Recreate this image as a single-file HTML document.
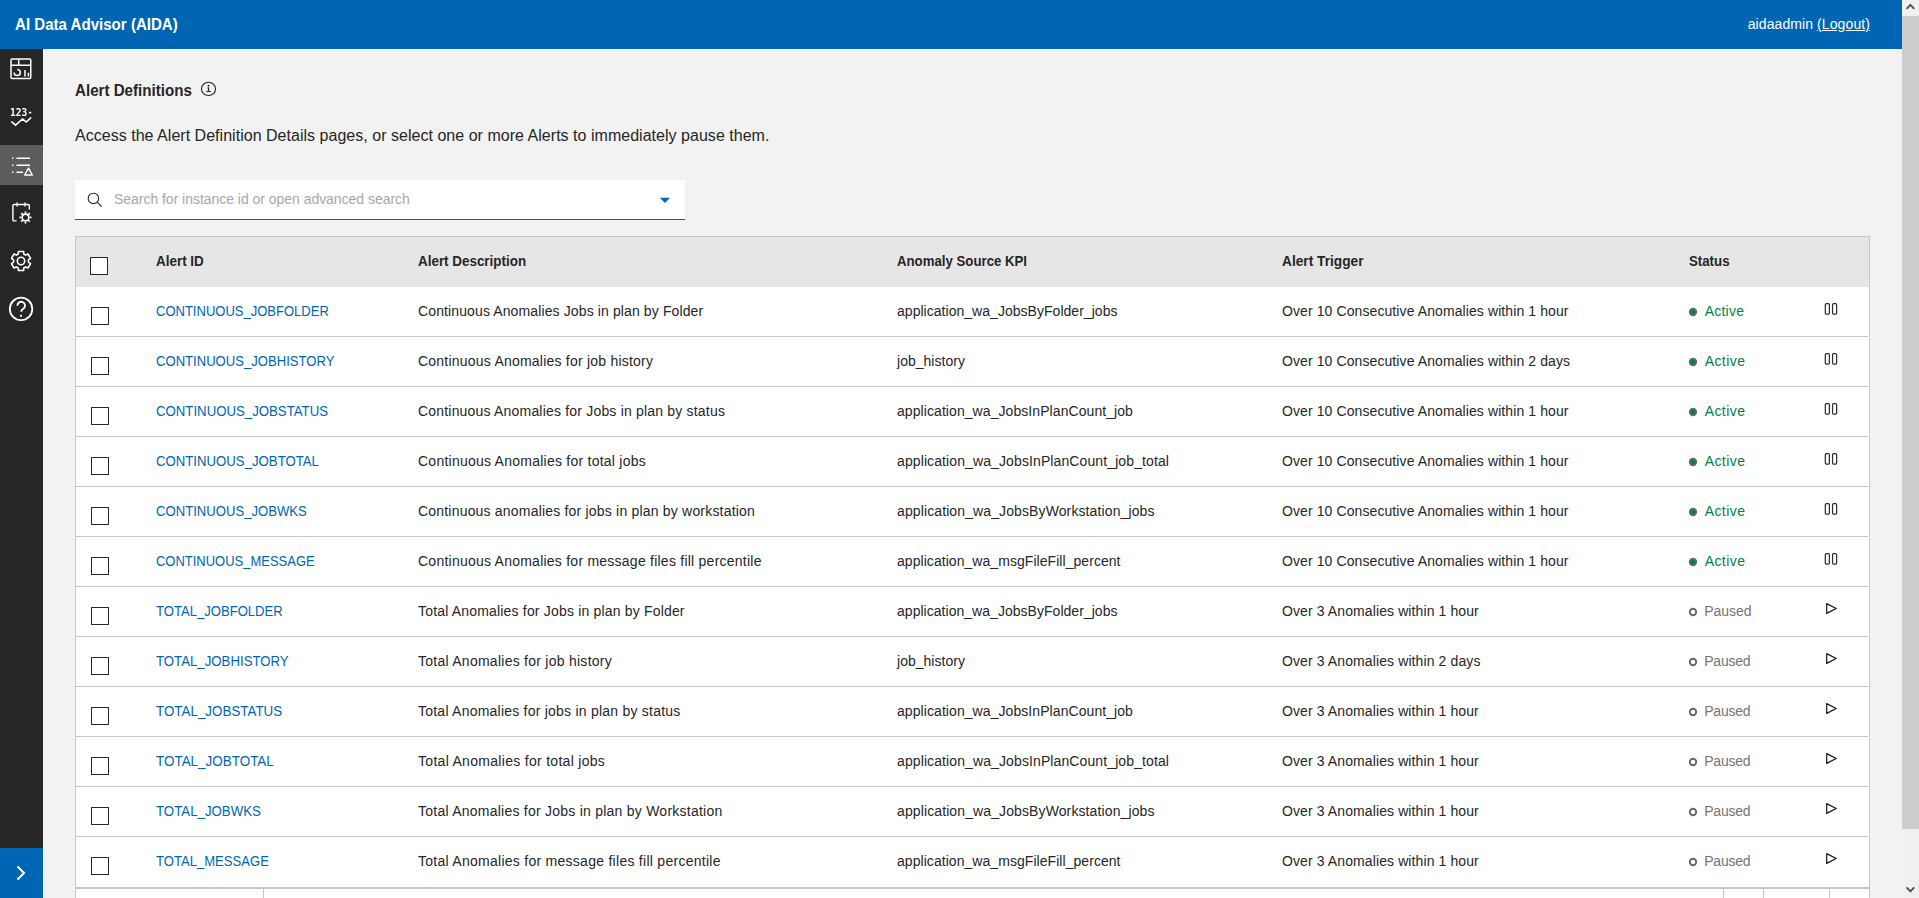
<!DOCTYPE html>
<html lang="en">
<head>
<meta charset="utf-8">
<title>AI Data Advisor (AIDA)</title>
<style>
*{box-sizing:border-box;margin:0;padding:0}
html,body{width:1919px;height:898px;overflow:hidden;background:#f2f2f2;font-family:"Liberation Sans",sans-serif;color:#262626;font-size:14px}
.abs{position:absolute}
#hdr{position:absolute;left:0;top:0;width:1902px;height:49px;background:#0066b3;color:#fff}
#hdr .title{position:absolute;left:15px;top:0;line-height:49px;font-size:16px;font-weight:bold;white-space:nowrap}
#hdr .user{position:absolute;right:32px;top:0;line-height:49px;font-size:14px;white-space:nowrap}
#hdr .user u{text-decoration:underline}
#side{position:absolute;left:0;top:49px;width:43px;height:849px;background:#262626}
#side .active{position:absolute;left:0;top:96px;width:43px;height:40px;background:#5c5c5c}
#side .expand{position:absolute;left:0;top:799px;width:43px;height:50px;background:#0066b3}
#side svg{position:absolute}
#sb{position:absolute;left:1902px;top:0;width:17px;height:898px;background:#f0f0f0}
#sb .thumb{position:absolute;left:0;top:16px;width:17px;height:813px;background:#cdcdcd}
#sb svg{position:absolute;left:0}
h1{position:absolute;left:75px;top:79px;font-size:16px;line-height:24px;font-weight:bold;white-space:nowrap;color:#262626}
#info{position:absolute;left:200px;top:80px}
#desc{position:absolute;left:75px;top:124px;font-size:16px;line-height:24px;white-space:nowrap;color:#262626}
#search{position:absolute;left:75px;top:180px;width:610px;height:40px;background:#fff;border-bottom:1px solid #0066b3}
#search .ph{position:absolute;left:39px;top:0;line-height:38px;font-size:14px;color:#a8a8a8;white-space:nowrap}
#search svg{position:absolute}
#tbl{position:absolute;left:75px;top:236px;width:1795px;height:700px;background:#fff;border:1px solid #c6c6c6}
#thead{position:absolute;left:76px;top:237px;width:1793px;height:50px;background:#e6e6e6;font-weight:bold;font-size:14px}
#thead .h{position:absolute;top:0;line-height:49px;white-space:nowrap;color:#262626}
.row{position:absolute;left:76px;width:1792px;height:50px;border-bottom:1px solid #c6c6c6;font-size:14px}
.row .c{position:absolute;top:0;line-height:49px;white-space:nowrap}
.cb{position:absolute;left:15px;top:20px;width:18px;height:18px;border:1px solid #262626;background:#fff;border-radius:.5px}
#thead .cb{left:14px;top:20px}
.id{left:80px;color:#0066b3}
.de{left:342px}
.kp{left:821px}
.tr{left:1206px}
.st{left:1628.7px}
.st.pau{left:1628.3px}
svg.dot{position:absolute;left:1612.1px;top:19.9px}
.act{color:#00804a}
.pau{color:#757575}
svg.ic{left:1747px;top:14px !important}
svg.ic.pl{top:14px !important}
.row.last{border-bottom:0}
#foot{position:absolute;left:76px;top:887px;width:1793px;height:11px;background:#fff;border-top:2px solid #c6c6c6}
#foot i{position:absolute;top:0;width:1px;height:10px;background:#c6c6c6}
</style>
</head>
<body>
<div id="hdr">
<div class="title"><span class="t" id="title" style="display:inline-block;transform-origin:0 50%;transform:scaleX(0.9422)">AI Data Advisor (AIDA)</span></div>
<div class="user"><span class="t" id="user" style="letter-spacing:0.093px">aidaadmin <u>(Logout)</u></span></div>
</div>

<div id="side">
<div class="active"></div>
<svg style="left:0;top:0;will-change:transform" width="43" height="300" viewBox="0 49 43 300" fill="none" stroke="#fff" stroke-width="1.5">
<!-- dashboard -->
<rect x="11" y="58.9" width="19.75" height="19.7" rx="1"/>
<path d="M11 65.3H30.75M18.7 58.9V65.3"/>
<path d="M17.2 69.4A3.1 3.1 0 1 1 14.1 72.5"/>
<path d="M25 70V76.4M28.4 72.8V76.4"/>
<!-- kpi -->
<text transform="translate(9.900 115.700) scale(.915 1)" font-family="DejaVu Sans Mono, Liberation Mono, monospace" font-size="10.500" font-weight="bold" fill="#fff" stroke="none">123</text>
<rect x="28.900" y="111.800" width="2.400" height="1.600" fill="#fff" stroke="none"/>
<path d="M11.800 121.900L15.600 125.200L22.500 119L26.300 122L30.700 117.800" stroke-width="1.600" stroke-linecap="round" stroke-linejoin="miter"/>
<!-- alert list -->
<g stroke-width="1.45">
<path d="M16.500 158.200H30M16.500 165.200H30M16.500 172.200H23"/>
<path d="M12 158.200H13.400M12 165.200H13.400M12 172.200H13.400"/>
<path d="M28.500 168.200L32.300 175H24.700Z" stroke-linejoin="round"/>
</g>
<!-- calendar gear -->
<g stroke-width="1.4">
<path d="M16.600 220.900H13.900a1 1 0 0 1 -1 -1V205.500a1 1 0 0 1 1 -1H28.300a1 1 0 0 1 1 1V209.500"/>
<path d="M17.100 202.400V206.600M25 202.400V206.600"/>
<circle cx="25.500" cy="217.400" r="3.300" stroke-width="1.600"/>
<path transform="translate(25.500 217.400)" stroke-width="1.800" d="M4.100 0L6 0M2.900 2.900L4.240 4.240M0 4.100L0 6M-2.900 2.900L-4.240 4.240M-4.100 0L-6 0M-2.900 -2.900L-4.240 -4.240M0 -4.100L0 -6M2.900 -2.900L4.240 -4.240"/>
</g>
<!-- gear -->
<g transform="translate(9 249)" stroke-width="1.600" stroke-linejoin="round">
<path d="M14.810 5.050 L14.560 2.440 L9.440 2.440 L9.190 5.050 L7.380 6.090 L5.000 5.000 L2.440 9.440 L4.570 10.960 L4.570 13.040 L2.440 14.560 L5.000 19.000 L7.380 17.910 L9.190 18.950 L9.440 21.560 L14.560 21.560 L14.810 18.950 L16.620 17.910 L19.000 19.000 L21.560 14.560 L19.430 13.040 L19.430 10.960 L21.560 9.440 L19.000 5.000 L16.620 6.090Z"/>
<circle cx="12" cy="12" r="3.700"/>
</g>
<!-- help -->
<circle cx="21.050" cy="308.950" r="11.250" stroke-width="1.800"/>
<path d="M17.400 305.700a3.800 3.800 0 1 1 5.900 3.100c-1.400 .9 -2.100 1.500 -2.100 3" stroke-width="1.900"/>
<rect x="20" y="314.800" width="2" height="2" rx=".4" fill="#fff" stroke="none"/>
</svg>
<div class="expand">
<svg style="left:16px;top:17.200px" width="10" height="16" viewBox="0 0 10 16" fill="none" stroke="#fff" stroke-width="2"><path d="M1.500 1.500 L8 8 L1.500 14.500"/></svg>
</div>
</div>

<h1><span class="t" id="h1" style="display:inline-block;transform-origin:0 50%;transform:scaleX(0.9455)">Alert Definitions</span></h1>
<svg id="info" width="18" height="18" viewBox="0 0 18 18" fill="none" stroke="#262626">
<ellipse cx="8.500" cy="8.900" rx="7.050" ry="6.600" stroke-width="1.100"/>
<path d="M8.550 7.500V11.400" stroke-width="1.300"/>
<path d="M7.300 7.900H8.600" stroke-width=".8"/>
<path d="M6.200 11.550H10.900" stroke-width="1"/>
<circle cx="8.550" cy="5.750" r=".95" fill="#262626" stroke="none"/>
</svg>
<div id="desc"><span class="t" id="desc_t" style="letter-spacing:0.026px">Access the Alert Definition Details pages, or select one or more Alerts to immediately pause them.</span></div>

<div id="search">
<svg style="left:10px;top:10px" width="20" height="20" viewBox="0 0 20 20" fill="none" stroke="#262626" stroke-width="1.100"><circle cx="8.400" cy="8.400" r="5.200"/><path d="M12.200 12.300L16.800 16.600"/></svg>
<span class="ph"><span class="t" id="ph" style="letter-spacing:-0.033px">Search for instance id or open advanced search</span></span>
<svg style="left:580px;top:10px" width="20" height="20" viewBox="0 0 20 20"><path d="M4.900 7.800H15L9.950 13Z" fill="#0066b3"/></svg>
</div>

<div id="tbl"></div>
<div id="thead">
<i class="cb"></i>
<span class="h" style="left:80px"><span class="t" id="h_a" style="display:inline-block;transform-origin:0 50%;transform:scaleX(0.9600)">Alert ID</span></span>
<span class="h" style="left:342px"><span class="t" id="h_b" style="display:inline-block;transform-origin:0 50%;transform:scaleX(0.9584)">Alert Description</span></span>
<span class="h" style="left:821px"><span class="t" id="h_c" style="display:inline-block;transform-origin:0 50%;transform:scaleX(0.9444)">Anomaly Source KPI</span></span>
<span class="h" style="left:1206px"><span class="t" id="h_d" style="display:inline-block;transform-origin:0 50%;transform:scaleX(0.9786)">Alert Trigger</span></span>
<span class="h" style="left:1613px"><span class="t" id="h_s" style="display:inline-block;transform-origin:0 50%;transform:scaleX(0.9466)">Status</span></span>
</div>
<div class="row" style="top:287px">
<i class="cb"></i>
<a class="c id"><span class="t" id="a0" style="display:inline-block;transform-origin:0 50%;transform:scaleX(0.9295)">CONTINUOUS_JOBFOLDER</span></a>
<span class="c de"><span class="t" id="b0" style="letter-spacing:0.119px">Continuous Anomalies Jobs in plan by Folder</span></span>
<span class="c kp"><span class="t" id="c0" style="letter-spacing:0.032px">application_wa_JobsByFolder_jobs</span></span>
<span class="c tr"><span class="t" id="d0" style="letter-spacing:0.095px">Over 10 Consecutive Anomalies within 1 hour</span></span>
<svg class="dot" width="10" height="10" viewBox="0 0 10 10"><circle cx="5" cy="5" r="3.2" fill="#00804a" stroke="#666" stroke-width="1.9"/></svg><span class="c st act"><span class="t" id="s0" style="letter-spacing:0.220px">Active</span></span>
<svg class="c ic" width="16" height="16" viewBox="0 0 16 16"><rect x="2.300" y="2.600" width="4.100" height="10.600" rx="1.200" fill="none" stroke="#2b2b2b" stroke-width="1.200"/><rect x="9.550" y="2.600" width="4.100" height="10.600" rx="1.200" fill="none" stroke="#2b2b2b" stroke-width="1.200"/></svg>
</div>
<div class="row" style="top:337px">
<i class="cb"></i>
<a class="c id"><span class="t" id="a1" style="display:inline-block;transform-origin:0 50%;transform:scaleX(0.9346)">CONTINUOUS_JOBHISTORY</span></a>
<span class="c de"><span class="t" id="b1" style="letter-spacing:0.221px">Continuous Anomalies for job history</span></span>
<span class="c kp"><span class="t" id="c1" style="letter-spacing:0.020px">job_history</span></span>
<span class="c tr"><span class="t" id="d1" style="letter-spacing:0.095px">Over 10 Consecutive Anomalies within 2 days</span></span>
<svg class="dot" width="10" height="10" viewBox="0 0 10 10"><circle cx="5" cy="5" r="3.2" fill="#00804a" stroke="#666" stroke-width="1.9"/></svg><span class="c st act"><span class="t" id="s1" style="letter-spacing:0.420px">Active</span></span>
<svg class="c ic" width="16" height="16" viewBox="0 0 16 16"><rect x="2.300" y="2.600" width="4.100" height="10.600" rx="1.200" fill="none" stroke="#2b2b2b" stroke-width="1.200"/><rect x="9.550" y="2.600" width="4.100" height="10.600" rx="1.200" fill="none" stroke="#2b2b2b" stroke-width="1.200"/></svg>
</div>
<div class="row" style="top:387px">
<i class="cb"></i>
<a class="c id"><span class="t" id="a2" style="display:inline-block;transform-origin:0 50%;transform:scaleX(0.9435)">CONTINUOUS_JOBSTATUS</span></a>
<span class="c de"><span class="t" id="b2" style="letter-spacing:0.192px">Continuous Anomalies for Jobs in plan by status</span></span>
<span class="c kp"><span class="t" id="c2" style="letter-spacing:0.073px">application_wa_JobsInPlanCount_job</span></span>
<span class="c tr"><span class="t" id="d2" style="letter-spacing:0.095px">Over 10 Consecutive Anomalies within 1 hour</span></span>
<svg class="dot" width="10" height="10" viewBox="0 0 10 10"><circle cx="5" cy="5" r="3.2" fill="#00804a" stroke="#666" stroke-width="1.9"/></svg><span class="c st act"><span class="t" id="s2" style="letter-spacing:0.420px">Active</span></span>
<svg class="c ic" width="16" height="16" viewBox="0 0 16 16"><rect x="2.300" y="2.600" width="4.100" height="10.600" rx="1.200" fill="none" stroke="#2b2b2b" stroke-width="1.200"/><rect x="9.550" y="2.600" width="4.100" height="10.600" rx="1.200" fill="none" stroke="#2b2b2b" stroke-width="1.200"/></svg>
</div>
<div class="row" style="top:437px">
<i class="cb"></i>
<a class="c id"><span class="t" id="a3" style="display:inline-block;transform-origin:0 50%;transform:scaleX(0.9422)">CONTINUOUS_JOBTOTAL</span></a>
<span class="c de"><span class="t" id="b3" style="letter-spacing:0.243px">Continuous Anomalies for total jobs</span></span>
<span class="c kp"><span class="t" id="c3" style="letter-spacing:0.107px">application_wa_JobsInPlanCount_job_total</span></span>
<span class="c tr"><span class="t" id="d3" style="letter-spacing:0.095px">Over 10 Consecutive Anomalies within 1 hour</span></span>
<svg class="dot" width="10" height="10" viewBox="0 0 10 10"><circle cx="5" cy="5" r="3.2" fill="#00804a" stroke="#666" stroke-width="1.9"/></svg><span class="c st act"><span class="t" id="s3" style="letter-spacing:0.420px">Active</span></span>
<svg class="c ic" width="16" height="16" viewBox="0 0 16 16"><rect x="2.300" y="2.600" width="4.100" height="10.600" rx="1.200" fill="none" stroke="#2b2b2b" stroke-width="1.200"/><rect x="9.550" y="2.600" width="4.100" height="10.600" rx="1.200" fill="none" stroke="#2b2b2b" stroke-width="1.200"/></svg>
</div>
<div class="row" style="top:487px">
<i class="cb"></i>
<a class="c id"><span class="t" id="a4" style="display:inline-block;transform-origin:0 50%;transform:scaleX(0.9366)">CONTINUOUS_JOBWKS</span></a>
<span class="c de"><span class="t" id="b4" style="letter-spacing:0.196px">Continuous anomalies for jobs in plan by workstation</span></span>
<span class="c kp"><span class="t" id="c4" style="letter-spacing:0.111px">application_wa_JobsByWorkstation_jobs</span></span>
<span class="c tr"><span class="t" id="d4" style="letter-spacing:0.095px">Over 10 Consecutive Anomalies within 1 hour</span></span>
<svg class="dot" width="10" height="10" viewBox="0 0 10 10"><circle cx="5" cy="5" r="3.2" fill="#00804a" stroke="#666" stroke-width="1.9"/></svg><span class="c st act"><span class="t" id="s4" style="letter-spacing:0.420px">Active</span></span>
<svg class="c ic" width="16" height="16" viewBox="0 0 16 16"><rect x="2.300" y="2.600" width="4.100" height="10.600" rx="1.200" fill="none" stroke="#2b2b2b" stroke-width="1.200"/><rect x="9.550" y="2.600" width="4.100" height="10.600" rx="1.200" fill="none" stroke="#2b2b2b" stroke-width="1.200"/></svg>
</div>
<div class="row" style="top:537px">
<i class="cb"></i>
<a class="c id"><span class="t" id="a5" style="display:inline-block;transform-origin:0 50%;transform:scaleX(0.9269)">CONTINUOUS_MESSAGE</span></a>
<span class="c de"><span class="t" id="b5" style="letter-spacing:0.240px">Continuous Anomalies for message files fill percentile</span></span>
<span class="c kp"><span class="t" id="c5" style="letter-spacing:0.052px">application_wa_msgFileFill_percent</span></span>
<span class="c tr"><span class="t" id="d5" style="letter-spacing:0.095px">Over 10 Consecutive Anomalies within 1 hour</span></span>
<svg class="dot" width="10" height="10" viewBox="0 0 10 10"><circle cx="5" cy="5" r="3.2" fill="#00804a" stroke="#666" stroke-width="1.9"/></svg><span class="c st act"><span class="t" id="s5" style="letter-spacing:0.420px">Active</span></span>
<svg class="c ic" width="16" height="16" viewBox="0 0 16 16"><rect x="2.300" y="2.600" width="4.100" height="10.600" rx="1.200" fill="none" stroke="#2b2b2b" stroke-width="1.200"/><rect x="9.550" y="2.600" width="4.100" height="10.600" rx="1.200" fill="none" stroke="#2b2b2b" stroke-width="1.200"/></svg>
</div>
<div class="row" style="top:587px">
<i class="cb"></i>
<a class="c id"><span class="t" id="a6" style="display:inline-block;transform-origin:0 50%;transform:scaleX(0.9341)">TOTAL_JOBFOLDER</span></a>
<span class="c de"><span class="t" id="b6" style="letter-spacing:0.180px">Total Anomalies for Jobs in plan by Folder</span></span>
<span class="c kp"><span class="t" id="c6" style="letter-spacing:0.032px">application_wa_JobsByFolder_jobs</span></span>
<span class="c tr"><span class="t" id="d6" style="letter-spacing:0.103px">Over 3 Anomalies within 1 hour</span></span>
<svg class="dot" width="10" height="10" viewBox="0 0 10 10"><circle cx="5" cy="5" r="3.2" fill="#fff" stroke="#666" stroke-width="1.9"/></svg><span class="c st pau"><span class="t" id="s6" style="letter-spacing:-0.060px">Paused</span></span>
<svg class="c ic pl" width="16" height="16" viewBox="0 0 16 16"><path d="M3.7 2.6 L13.2 7.5 L3.7 12.4 Z" fill="none" stroke="#161616" stroke-width="1.200" stroke-linejoin="round"/></svg>
</div>
<div class="row" style="top:637px">
<i class="cb"></i>
<a class="c id"><span class="t" id="a7" style="display:inline-block;transform-origin:0 50%;transform:scaleX(0.9440)">TOTAL_JOBHISTORY</span></a>
<span class="c de"><span class="t" id="b7" style="letter-spacing:0.259px">Total Anomalies for job history</span></span>
<span class="c kp"><span class="t" id="c7" style="letter-spacing:0.020px">job_history</span></span>
<span class="c tr"><span class="t" id="d7" style="letter-spacing:0.106px">Over 3 Anomalies within 2 days</span></span>
<svg class="dot" width="10" height="10" viewBox="0 0 10 10"><circle cx="5" cy="5" r="3.2" fill="#fff" stroke="#666" stroke-width="1.9"/></svg><span class="c st pau"><span class="t" id="s7" style="letter-spacing:-0.260px">Paused</span></span>
<svg class="c ic pl" width="16" height="16" viewBox="0 0 16 16"><path d="M3.7 2.6 L13.2 7.5 L3.7 12.4 Z" fill="none" stroke="#161616" stroke-width="1.200" stroke-linejoin="round"/></svg>
</div>
<div class="row" style="top:687px">
<i class="cb"></i>
<a class="c id"><span class="t" id="a8" style="display:inline-block;transform-origin:0 50%;transform:scaleX(0.9561)">TOTAL_JOBSTATUS</span></a>
<span class="c de"><span class="t" id="b8" style="letter-spacing:0.229px">Total Anomalies for jobs in plan by status</span></span>
<span class="c kp"><span class="t" id="c8" style="letter-spacing:0.073px">application_wa_JobsInPlanCount_job</span></span>
<span class="c tr"><span class="t" id="d8" style="letter-spacing:0.103px">Over 3 Anomalies within 1 hour</span></span>
<svg class="dot" width="10" height="10" viewBox="0 0 10 10"><circle cx="5" cy="5" r="3.2" fill="#fff" stroke="#666" stroke-width="1.9"/></svg><span class="c st pau"><span class="t" id="s8" style="letter-spacing:-0.260px">Paused</span></span>
<svg class="c ic pl" width="16" height="16" viewBox="0 0 16 16"><path d="M3.7 2.6 L13.2 7.5 L3.7 12.4 Z" fill="none" stroke="#161616" stroke-width="1.200" stroke-linejoin="round"/></svg>
</div>
<div class="row" style="top:737px">
<i class="cb"></i>
<a class="c id"><span class="t" id="a9" style="display:inline-block;transform-origin:0 50%;transform:scaleX(0.9602)">TOTAL_JOBTOTAL</span></a>
<span class="c de"><span class="t" id="b9" style="letter-spacing:0.298px">Total Anomalies for total jobs</span></span>
<span class="c kp"><span class="t" id="c9" style="letter-spacing:0.107px">application_wa_JobsInPlanCount_job_total</span></span>
<span class="c tr"><span class="t" id="d9" style="letter-spacing:0.103px">Over 3 Anomalies within 1 hour</span></span>
<svg class="dot" width="10" height="10" viewBox="0 0 10 10"><circle cx="5" cy="5" r="3.2" fill="#fff" stroke="#666" stroke-width="1.9"/></svg><span class="c st pau"><span class="t" id="s9" style="letter-spacing:-0.260px">Paused</span></span>
<svg class="c ic pl" width="16" height="16" viewBox="0 0 16 16"><path d="M3.7 2.6 L13.2 7.5 L3.7 12.4 Z" fill="none" stroke="#161616" stroke-width="1.200" stroke-linejoin="round"/></svg>
</div>
<div class="row" style="top:787px">
<i class="cb"></i>
<a class="c id"><span class="t" id="a10" style="display:inline-block;transform-origin:0 50%;transform:scaleX(0.9477)">TOTAL_JOBWKS</span></a>
<span class="c de"><span class="t" id="b10" style="letter-spacing:0.242px">Total Anomalies for Jobs in plan by Workstation</span></span>
<span class="c kp"><span class="t" id="c10" style="letter-spacing:0.111px">application_wa_JobsByWorkstation_jobs</span></span>
<span class="c tr"><span class="t" id="d10" style="letter-spacing:0.103px">Over 3 Anomalies within 1 hour</span></span>
<svg class="dot" width="10" height="10" viewBox="0 0 10 10"><circle cx="5" cy="5" r="3.2" fill="#fff" stroke="#666" stroke-width="1.9"/></svg><span class="c st pau"><span class="t" id="s10" style="letter-spacing:-0.260px">Paused</span></span>
<svg class="c ic pl" width="16" height="16" viewBox="0 0 16 16"><path d="M3.7 2.6 L13.2 7.5 L3.7 12.4 Z" fill="none" stroke="#161616" stroke-width="1.200" stroke-linejoin="round"/></svg>
</div>
<div class="row last" style="top:837px">
<i class="cb"></i>
<a class="c id"><span class="t" id="a11" style="display:inline-block;transform-origin:0 50%;transform:scaleX(0.9339)">TOTAL_MESSAGE</span></a>
<span class="c de"><span class="t" id="b11" style="letter-spacing:0.271px">Total Anomalies for message files fill percentile</span></span>
<span class="c kp"><span class="t" id="c11" style="letter-spacing:0.052px">application_wa_msgFileFill_percent</span></span>
<span class="c tr"><span class="t" id="d11" style="letter-spacing:0.103px">Over 3 Anomalies within 1 hour</span></span>
<svg class="dot" width="10" height="10" viewBox="0 0 10 10"><circle cx="5" cy="5" r="3.2" fill="#fff" stroke="#666" stroke-width="1.9"/></svg><span class="c st pau"><span class="t" id="s11" style="letter-spacing:-0.260px">Paused</span></span>
<svg class="c ic pl" width="16" height="16" viewBox="0 0 16 16"><path d="M3.7 2.6 L13.2 7.5 L3.7 12.4 Z" fill="none" stroke="#161616" stroke-width="1.200" stroke-linejoin="round"/></svg>
</div>
<div id="foot"><i style="left:187px"></i><i style="left:1647px"></i><i style="left:1687px"></i><i style="left:1753px"></i></div>

<div id="sb">
<svg style="top:0" width="17" height="17" viewBox="0 0 17 17"><path d="M4.600 8.900L8.400 4.900L12.200 8.900" fill="none" stroke="#505050" stroke-width="2"/></svg>
<div class="thumb"></div>
<svg style="top:881px" width="17" height="17" viewBox="0 0 17 17"><path d="M4.600 6.400L8.400 10.400L12.200 6.400" fill="none" stroke="#505050" stroke-width="2"/></svg>
</div>
</body>
</html>
